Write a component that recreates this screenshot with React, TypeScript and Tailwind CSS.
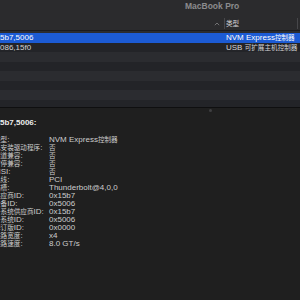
import React from 'react';

// CJK glyphs in the reference render noticeably smaller than the Latin text
function T({ text }: { text: string }) {
  const parts = text.split(/([\u3000-\u9fff\uff00-\uffef]+)/).filter(Boolean);
  return (
    <>
      {parts.map((p, i) =>
        /[\u3000-\u9fff\uff00-\uffef]/.test(p) ? (
          <span key={i} className="text-[6.6px]">{p}</span>
        ) : (
          <span key={i}>{p}</span>
        )
      )}
    </>
  );
}

const rows = [
  { name: 'pci15b7,5006', type: 'NVM Express控制器', selected: true },
  { name: 'pci8086,15f0', type: 'USB 可扩展主机控制器' },
  { name: '', type: '' },
  { name: '', type: '' },
  { name: '', type: '' },
  { name: '', type: '' },
  { name: '', type: '' },
  { name: '', type: '' },
];

const details: [string, string][] = [
  ['类型:', 'NVM Express控制器'],
  ['已安装驱动程序:', '否'],
  ['隧道兼容:', '否'],
  ['暂停兼容:', '否'],
  ['MSI:', '否'],
  ['总线:', 'PCI'],
  ['插槽:', 'Thunderbolt@4,0,0'],
  ['供应商ID:', '0x15b7'],
  ['设备ID:', '0x5006'],
  ['子系统供应商ID:', '0x15b7'],
  ['子系统ID:', '0x5006'],
  ['修订版ID:', '0x0000'],
  ['链路宽度:', 'x4'],
  ['链路速度:', '8.0 GT/s'],
];

export default function App() {
  return (
    <div className="w-[300px] h-[300px] overflow-hidden flex flex-col bg-[#1f1f1f] text-[8px] font-['Liberation_Sans','Noto_Sans_CJK_SC',sans-serif]">
      {/* Title bar */}
      <div className="h-[13px] shrink-0 flex items-center pl-[185px] bg-[#2b2b2d]">
        <span className="text-[8.5px] font-semibold text-[#8b8b8d] leading-none">MacBook Pro</span>
      </div>

      {/* Column header */}
      <div className="h-[18px] shrink-0 flex items-center pt-[4px] bg-[#2b2b2d] border-b border-[#1b1b1d]">
        <div className="w-[224px] h-full flex items-center justify-end pr-[4px]">
          <svg width="6" height="4" viewBox="0 0 6 4" className="mt-[1px]">
            <path d="M0.8 3.2 L3 1 L5.2 3.2" fill="none" stroke="#7a7a7c" strokeWidth="0.9" />
          </svg>
        </div>
        <div className="w-px h-[11px] bg-[#47474a]" />
        <div className="flex-1 pl-[1px] text-[#d2d2d4] leading-none">
          <T text="类型" />
        </div>
        <div className="w-px h-[11px] bg-[#47474a] mr-[2px]" />
      </div>

      {/* Table rows */}
      <div className="h-[76px] shrink-0 overflow-hidden bg-[#2b2c30] pt-[2px]">
        {rows.map((r, i) => (
          <div
            key={i}
            className={`h-[9.5px] flex items-center leading-[9.5px] whitespace-nowrap ${
              r.selected ? 'bg-[#1c5bd4] text-white' : i % 2 === 1 ? 'bg-[#232428] text-[#d4d4d6]' : 'bg-[#2b2c30] text-[#d4d4d6]'
            }`}
          >
            <div className="w-[226px] shrink-0 overflow-hidden">
              <div className="-ml-[14.7px]">{r.name}</div>
            </div>
            <div>
              <T text={r.type} />
            </div>
          </div>
        ))}
      </div>

      {/* Divider */}
      <div className="h-px shrink-0 bg-[#0f0f10]" />

      {/* Detail panel */}
      <div className="relative flex-1 bg-[#1f1f1f] pt-[11px]">
        <div className="absolute left-[209px] top-[1px] w-[3px] h-[3px] rounded-full bg-[#3f3f41]" />
        <div className="-ml-[16px] font-bold text-[#ececec] leading-[8px] whitespace-nowrap">pci15b7,5006:</div>
        <div className="mt-[9px] flex flex-col">
          {details.map(([k, v]) => (
            <div key={k} className="h-[8px] flex items-center leading-[8px] whitespace-nowrap text-[#cdcdcd]">
              <div className="w-[55px] shrink-0 -ml-[6px]">
                <T text={k} />
              </div>
              <div>
                <T text={v} />
              </div>
            </div>
          ))}
        </div>
      </div>
    </div>
  );
}
